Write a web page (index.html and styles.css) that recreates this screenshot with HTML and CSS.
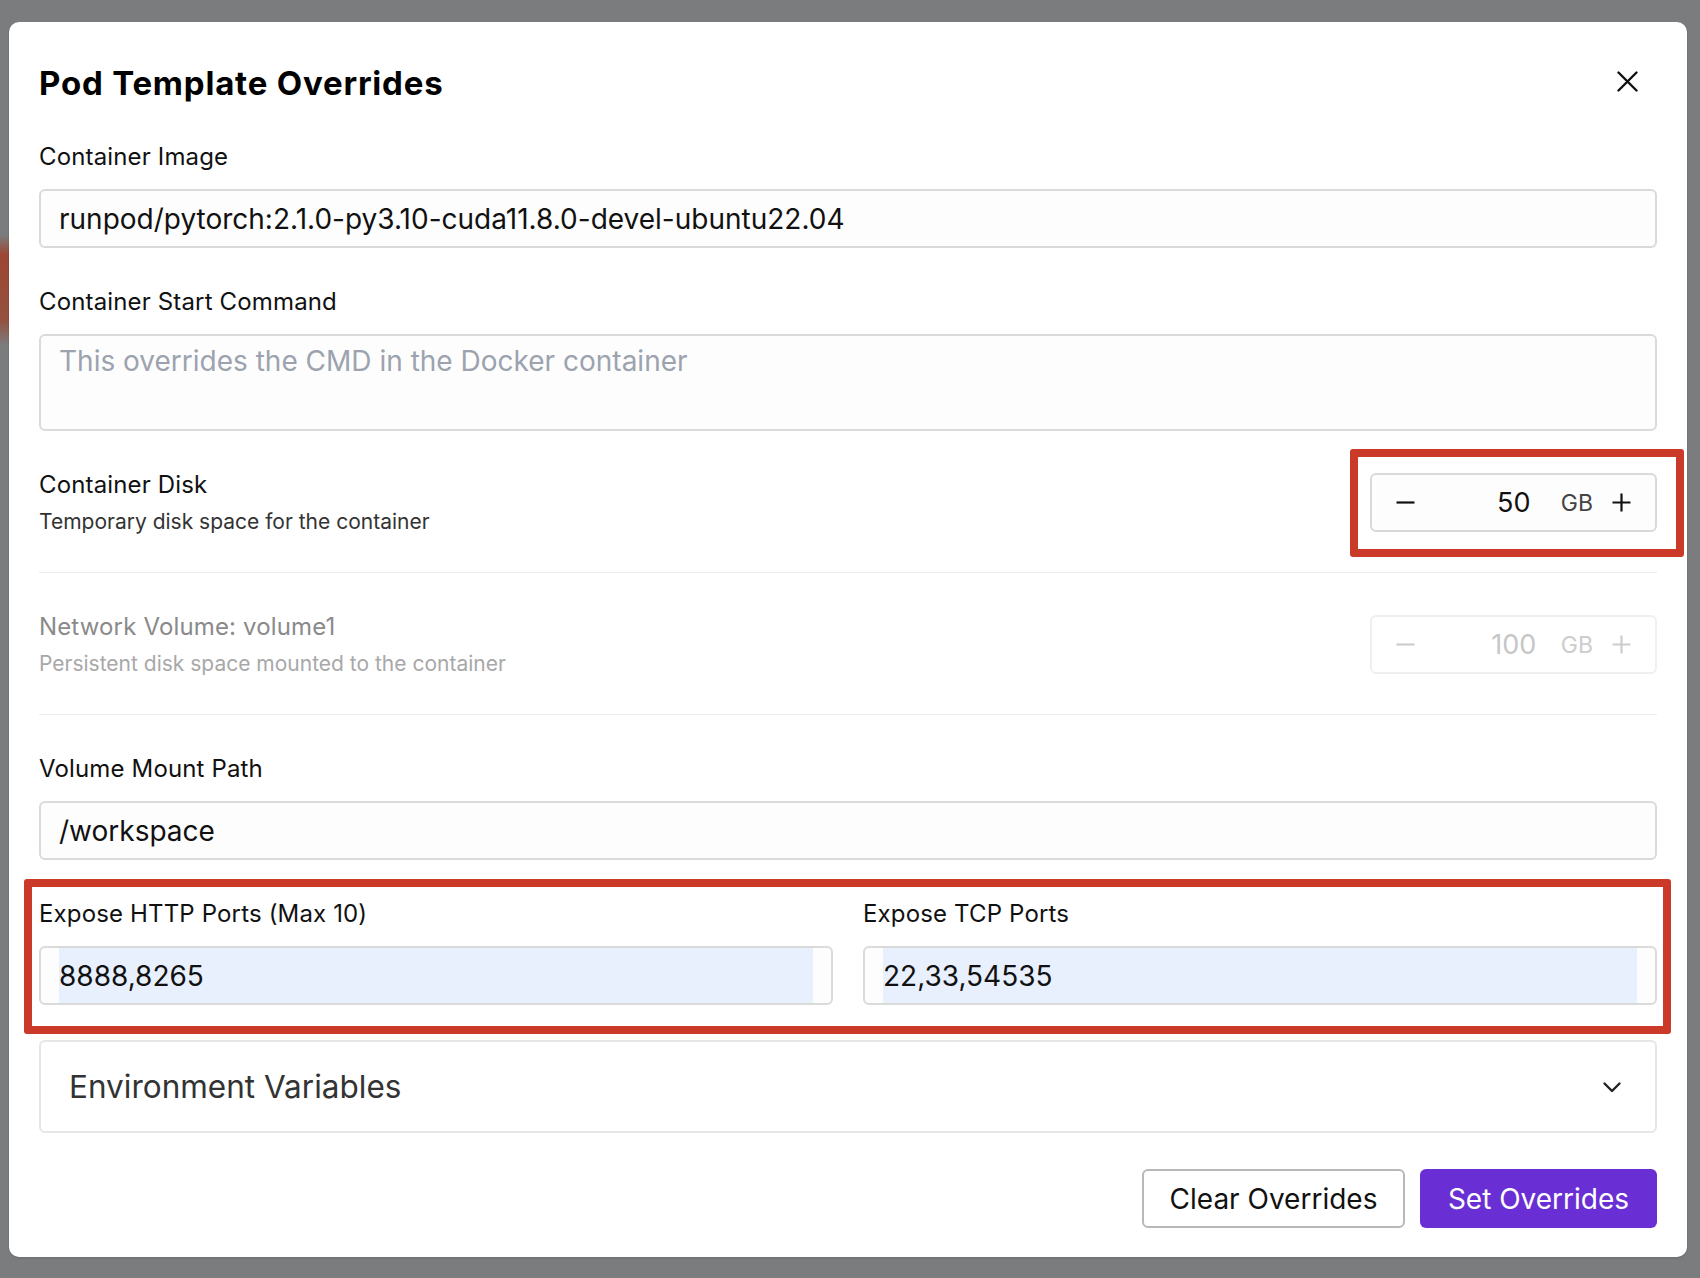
FILE: index.html
```html
<!DOCTYPE html>
<html lang="en">
<head>
<meta charset="utf-8">
<title>Pod Template Overrides</title>
<link rel="stylesheet" href="styles.css">
</head>
<body>
<div class="modal" role="dialog" aria-labelledby="modal-title">
  <div class="modal-header">
    <h2 class="modal-title" id="modal-title">Pod Template Overrides</h2>
    <button class="close-btn" type="button" aria-label="Close">
      <svg width="21" height="21" viewBox="0 0 21 21"><path d="M1.5 1.5L19.5 19.5M19.5 1.5L1.5 19.5" stroke="#111" stroke-width="2.4" stroke-linecap="round"/></svg>
    </button>
  </div>

  <div class="field">
    <label class="label">Container Image</label>
    <div class="box"><input class="box-input" type="text" value="runpod/pytorch:2.1.0-py3.10-cuda11.8.0-devel-ubuntu22.04"></div>
  </div>

  <div class="field">
    <label class="label">Container Start Command</label>
    <textarea class="textarea" placeholder="This overrides the CMD in the Docker container"></textarea>
  </div>

  <div class="disk-row">
    <div class="disk-text">
      <div class="label">Container Disk</div>
      <div class="sublabel">Temporary disk space for the container</div>
    </div>
    <div class="stepper">
      <span class="step-btn"><svg width="19" height="19" viewBox="0 0 19 19"><path d="M0.5 9.5H18.5" stroke="#111" stroke-width="2.2"/></svg></span>
      <span class="step-value">50</span>
      <span class="step-unit">GB</span>
      <span class="step-btn plus"><svg width="19" height="19" viewBox="0 0 19 19"><path d="M0.5 9.5H18.5M9.5 0.5V18.5" stroke="#111" stroke-width="2.2"/></svg></span>
      <div class="annot annot-disk"></div>
    </div>
  </div>

  <div class="divider"></div>

  <div class="disk-row disabled">
    <div class="disk-text">
      <div class="label">Network Volume: volume1</div>
      <div class="sublabel">Persistent disk space mounted to the container</div>
    </div>
    <div class="stepper">
      <span class="step-btn"><svg width="19" height="19" viewBox="0 0 19 19"><path d="M0.5 9.5H18.5" stroke="#cdcdcd" stroke-width="2.2"/></svg></span>
      <span class="step-value">100</span>
      <span class="step-unit">GB</span>
      <span class="step-btn plus"><svg width="19" height="19" viewBox="0 0 19 19"><path d="M0.5 9.5H18.5M9.5 0.5V18.5" stroke="#cdcdcd" stroke-width="2.2"/></svg></span>
    </div>
  </div>

  <div class="divider"></div>

  <div class="field">
    <label class="label">Volume Mount Path</label>
    <div class="box"><input class="box-input" type="text" value="/workspace"></div>
  </div>

  <div class="ports-row">
    <div class="port-col">
      <label class="label">Expose HTTP Ports (Max 10)</label>
      <div class="box"><input class="box-input autofill" type="text" value="8888,8265"></div>
    </div>
    <div class="port-col">
      <label class="label">Expose TCP Ports</label>
      <div class="box"><input class="box-input autofill" type="text" value="22,33,54535"></div>
    </div>
    <div class="annot annot-ports"></div>
  </div>

  <div class="env-box">
    <span class="env-title">Environment Variables</span>
    <svg class="chevron" width="20" height="20" viewBox="0 0 20 20"><path d="M2.5 6.5L10 14L17.5 6.5" fill="none" stroke="#222" stroke-width="2.4" stroke-linecap="round" stroke-linejoin="round"/></svg>
  </div>

  <div class="actions">
    <button class="btn btn-clear" type="button">Clear Overrides</button>
    <button class="btn btn-set" type="button">Set Overrides</button>
  </div>
</div>
</body>
</html>
```

FILE: styles.css
```css
* {
  box-sizing: border-box;
}

html,
body {
  margin: 0;
}

body {
  min-height: 1278px;
  padding: 22px 13px 21px 9px;
  font-family: Inter, "Noto Sans", Arial, sans-serif;
  color: #111;
  background:
    linear-gradient(to bottom, transparent 235px, #9c4633 255px, #94513f 320px, transparent 345px) left top / 9px 100% no-repeat,
    #7b7c7e;
}

.modal {
  position: relative;
  width: 1678px;
  padding: 41px 30px 29px;
  background: #fff;
  border-radius: 10px;
  box-shadow: 0 1px 0 1px rgba(0, 0, 0, 0.06);
  display: flex;
  flex-direction: column;
}

.modal-header {
  display: flex;
  align-items: center;
  justify-content: space-between;
  height: 40px;
}

.modal-title {
  margin: 0;
  font-size: 33px;
  font-weight: 700;
  letter-spacing: 0.8px;
  line-height: 40px;
  color: #000;
}

.close-btn {
  width: 21px;
  height: 21px;
  margin-right: 19px;
  margin-bottom: 4px;
  padding: 0;
  border: 0;
  background: none;
  display: flex;
}

.field {
  margin-top: 40px;
}

.label {
  display: block;
  font-size: 24px;
  letter-spacing: 0.15px;
  line-height: 28px;
  color: #111;
}

.box {
  margin-top: 18px;
  height: 59px;
  padding: 0 18px;
  border: 2px solid #dadada;
  border-radius: 6px;
  background: #fdfdfd;
  display: flex;
}

.box-input {
  flex: 1;
  min-width: 0;
  height: 100%;
  padding: 0;
  border: 0;
  outline: 0;
  background: transparent;
  font-family: inherit;
  font-size: 28px;
  color: #111;
}

.box-input.autofill {
  background: #e8f0fe;
}

.textarea {
  display: block;
  width: 100%;
  height: 97px;
  margin-top: 18px;
  padding: 8px 18px;
  border: 2px solid #dadada;
  border-radius: 6px;
  background: #fdfdfd;
  font-family: inherit;
  font-size: 28px;
  line-height: 34px;
  color: #111;
  resize: none;
  outline: 0;
}

.textarea::placeholder {
  color: #9ca3af;
}

.disk-row {
  margin-top: 40px;
  display: flex;
  align-items: flex-start;
  justify-content: space-between;
}

.sublabel {
  margin-top: 10px;
  font-size: 21px;
  line-height: 26px;
  color: #333;
}

.disk-row.disabled .label {
  color: #8a8a8a;
}

.disk-row.disabled .sublabel {
  color: #a8a8a8;
}

.stepper {
  position: relative;
  width: 287px;
  height: 59px;
  margin-top: 2px;
  padding: 0 24px;
  border: 2px solid #d9d9d9;
  border-radius: 6px;
  background: #fdfdfd;
  display: flex;
  align-items: center;
}

.step-btn {
  width: 19px;
  height: 19px;
  display: flex;
}

.step-value {
  width: 80px;
  margin-left: auto;
  text-align: center;
  font-size: 27px;
  color: #111;
}

.step-unit {
  margin-left: 7px;
  font-size: 23px;
  color: #444;
}

.step-btn.plus {
  margin-left: 19px;
}

.disabled .stepper {
  border-color: #efefef;
  background: #fff;
}

.disabled .step-value {
  color: #c6c6c6;
}

.disabled .step-unit {
  color: #cdcdcd;
}

.divider {
  height: 1px;
  margin-top: 37px;
  background: #ececec;
}

.ports-row {
  position: relative;
  margin-top: 40px;
  display: grid;
  grid-template-columns: 1fr 1fr;
  column-gap: 30px;
}

.annot {
  position: absolute;
  border: 8px solid #cb3a28;
  border-radius: 3px;
  pointer-events: none;
}

.annot-disk {
  left: -22px;
  top: -26px;
  right: -29px;
  bottom: -27px;
}

.annot-ports {
  left: -15px;
  top: -21px;
  right: -14px;
  bottom: -29px;
}

.env-box {
  height: 93px;
  margin-top: 35px;
  padding: 0 33px 0 28px;
  border: 2px solid #e6e6e6;
  border-radius: 6px;
  display: flex;
  align-items: center;
  justify-content: space-between;
}

.env-title {
  font-size: 31.5px;
  color: #333;
}

.actions {
  margin-top: 36px;
  display: flex;
  justify-content: flex-end;
  gap: 15px;
}

.btn {
  height: 59px;
  border-radius: 6px;
  font-family: inherit;
  font-size: 28px;
  padding: 0;
}

.btn-clear {
  width: 263px;
  border: 2px solid #b8b8b8;
  background: #fff;
  color: #111;
}

.btn-set {
  width: 237px;
  border: 0;
  background: #6a2fd4;
  color: #fff;
}
```
